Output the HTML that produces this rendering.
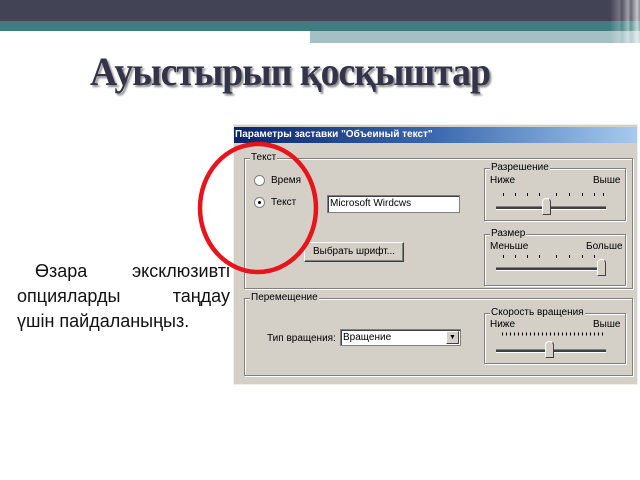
<!DOCTYPE html>
<html><head><meta charset="utf-8"><style>
*{margin:0;padding:0;box-sizing:border-box}
body{width:640px;height:480px;background:#fff;position:relative;overflow:hidden;font-family:"Liberation Sans",sans-serif}
.abs{position:absolute}
.top{left:0;top:0;width:640px;height:21px;background:#434356}
.teal{left:0;top:21px;width:640px;height:10px;background:#3e7e82}
.lt{left:310px;top:31px;width:330px;height:12px;background:#a4c0c4}
.stripe{top:0;height:44px;width:30px;left:610px;background:linear-gradient(90deg,rgba(255,255,255,0) 0%,rgba(255,255,255,.25) 30%,rgba(255,255,255,.1) 40%,rgba(255,255,255,.5) 60%,rgba(255,255,255,.2) 70%,rgba(255,255,255,.7) 90%,rgba(255,255,255,.4) 100%)}
h1{position:absolute;left:90px;top:48px;font-family:"Liberation Serif",serif;font-weight:bold;font-size:40px;color:#33334a;letter-spacing:-1px;text-shadow:2px 2px 2px #888;transform:scaleX(.94);transform-origin:left;white-space:nowrap}
.ln{position:absolute;left:17px;width:213px;font-size:18px;line-height:25px;text-align:justify;text-align-last:justify;color:#111;white-space:nowrap}
.dlg{left:233px;top:124px;width:405px;height:261px;background:#d4d0c8;border:1px solid #f0eee8;font-size:10px;color:#000}
.tb{left:0;top:2px;width:403px;height:16px;background:linear-gradient(90deg,#0a246a,#3a6ab0 50%,#a6caf0);color:#fff;font-weight:bold;font-size:10px;line-height:16px;padding-left:1px}
.grp{border:1px solid #808080;box-shadow:1px 1px 0 #fff,inset 1px 1px 0 #fff}
.lbl{position:absolute;top:-7px;left:5px;background:#d4d0c8;padding:0 1px;font-size:10px;line-height:12px}
.in{background:#fff;border:1px solid #808080;box-shadow:inset 1px 1px 0 #404040;font-size:10px;line-height:15px;padding-left:2px}
.btn{border:1px solid #404040;border-top-color:#fff;border-left-color:#fff;box-shadow:inset -1px -1px 0 #808080;text-align:center;line-height:17px}
.rad{width:11px;height:11px;border-radius:50%;background:#fff;border:1px solid #808080}
.track{height:4px;border-top:1px solid #808080;border-bottom:1px solid #fff;background:#404040}
.thumb{width:9px;height:17px;background:#d4d0c8;border:1px solid #404040;border-top-color:#fff;border-left-color:#fff;border-radius:4px 4px 0 0}
</style></head><body>
<div class="abs top"></div><div class="abs teal"></div><div class="abs lt"></div><div class="abs stripe"></div>
<h1>Ауыстырып қосқыштар</h1>
<div class="ln" style="top:259px"><span style="padding-left:18px">Өзара</span> эксклюзивті</div>
<div class="ln" style="top:284px">опцияларды таңдау</div>
<div class="ln" style="top:309px;text-align-last:left">үшін пайдаланыңыз.</div>

<div class="abs dlg">
 <div class="abs tb">Параметры заставки "Объеиный текст"</div>
 <div class="abs grp" style="left:10px;top:33px;width:389px;height:131px"><span class="lbl">Текст</span></div>
 <div class="abs rad" style="left:20px;top:50px"></div><div class="abs" style="left:37px;top:50px">Время</div>
 <div class="abs rad" style="left:20px;top:72px"><div style="position:absolute;left:3px;top:3px;width:3px;height:3px;background:#000;border-radius:50%"></div></div><div class="abs" style="left:37px;top:72px">Текст</div>
 <div class="abs in" style="left:93px;top:70px;width:133px;height:18px">Microsoft Wirdcws</div>
 <div class="abs btn" style="left:70px;top:117px;width:100px;height:20px">Выбрать шрифт...</div>

 <div class="abs grp" style="left:250px;top:43px;width:142px;height:53px"><span class="lbl">Разрешение</span></div>
 <div class="abs" style="left:256px;top:50px">Ниже</div><div class="abs" style="left:359px;top:50px">Выше</div>
 <div class="abs track" style="left:262px;top:81px;width:110px"></div>
 <div class="abs thumb" style="left:308px;top:73px"></div>

 <div class="abs grp" style="left:250px;top:109px;width:142px;height:52px"><span class="lbl">Размер</span></div>
 <div class="abs" style="left:256px;top:116px">Меньше</div><div class="abs" style="left:352px;top:116px">Больше</div>
 <div class="abs track" style="left:262px;top:142px;width:110px"></div>
 <div class="abs thumb" style="left:363px;top:134px"></div>

 <div class="abs grp" style="left:10px;top:173px;width:389px;height:78px"><span class="lbl">Перемещение</span></div>
 <div class="abs" style="left:33px;top:208px">Тип вращения:</div>
 <div class="abs in" style="left:106px;top:204px;width:121px;height:17px">Вращение<div style="position:absolute;right:1px;top:1px;width:13px;height:13px;background:#d4d0c8;border:1px solid #404040;border-top-color:#fff;border-left-color:#fff;font-size:7px;line-height:11px;text-align:center">▼</div></div>

 <div class="abs grp" style="left:250px;top:188px;width:142px;height:51px"><span class="lbl">Скорость вращения</span></div>
 <div class="abs" style="left:256px;top:194px">Ниже</div><div class="abs" style="left:359px;top:194px">Выше</div>
 <div class="abs track" style="left:262px;top:224px;width:110px"></div>
 <div class="abs thumb" style="left:311px;top:216px"></div>
</div>

<svg class="abs" style="left:0;top:0" width="640" height="480">
 <g fill="#000">
  <rect x="503" y="193" width="1" height="3"/><rect x="515" y="193" width="1" height="3"/><rect x="527" y="193" width="1" height="3"/><rect x="539" y="193" width="1" height="3"/><rect x="556" y="193" width="1" height="3"/><rect x="569" y="193" width="1" height="3"/><rect x="582" y="193" width="1" height="3"/><rect x="594" y="193" width="1" height="3"/><rect x="603" y="193" width="1" height="3"/>
  <rect x="503" y="255" width="1" height="3"/><rect x="515" y="255" width="1" height="3"/><rect x="527" y="255" width="1" height="3"/><rect x="539" y="255" width="1" height="3"/><rect x="556" y="255" width="1" height="3"/><rect x="569" y="255" width="1" height="3"/><rect x="582" y="255" width="1" height="3"/><rect x="594" y="255" width="1" height="3"/>
 </g>
 <line x1="502" y1="334" x2="604" y2="334" stroke="#000" stroke-dasharray="1 3" stroke-width="3"/>
 <ellipse cx="258" cy="208" rx="58" ry="64" fill="none" stroke="#e8141c" stroke-width="4.5"/>
</svg>
</body></html>
